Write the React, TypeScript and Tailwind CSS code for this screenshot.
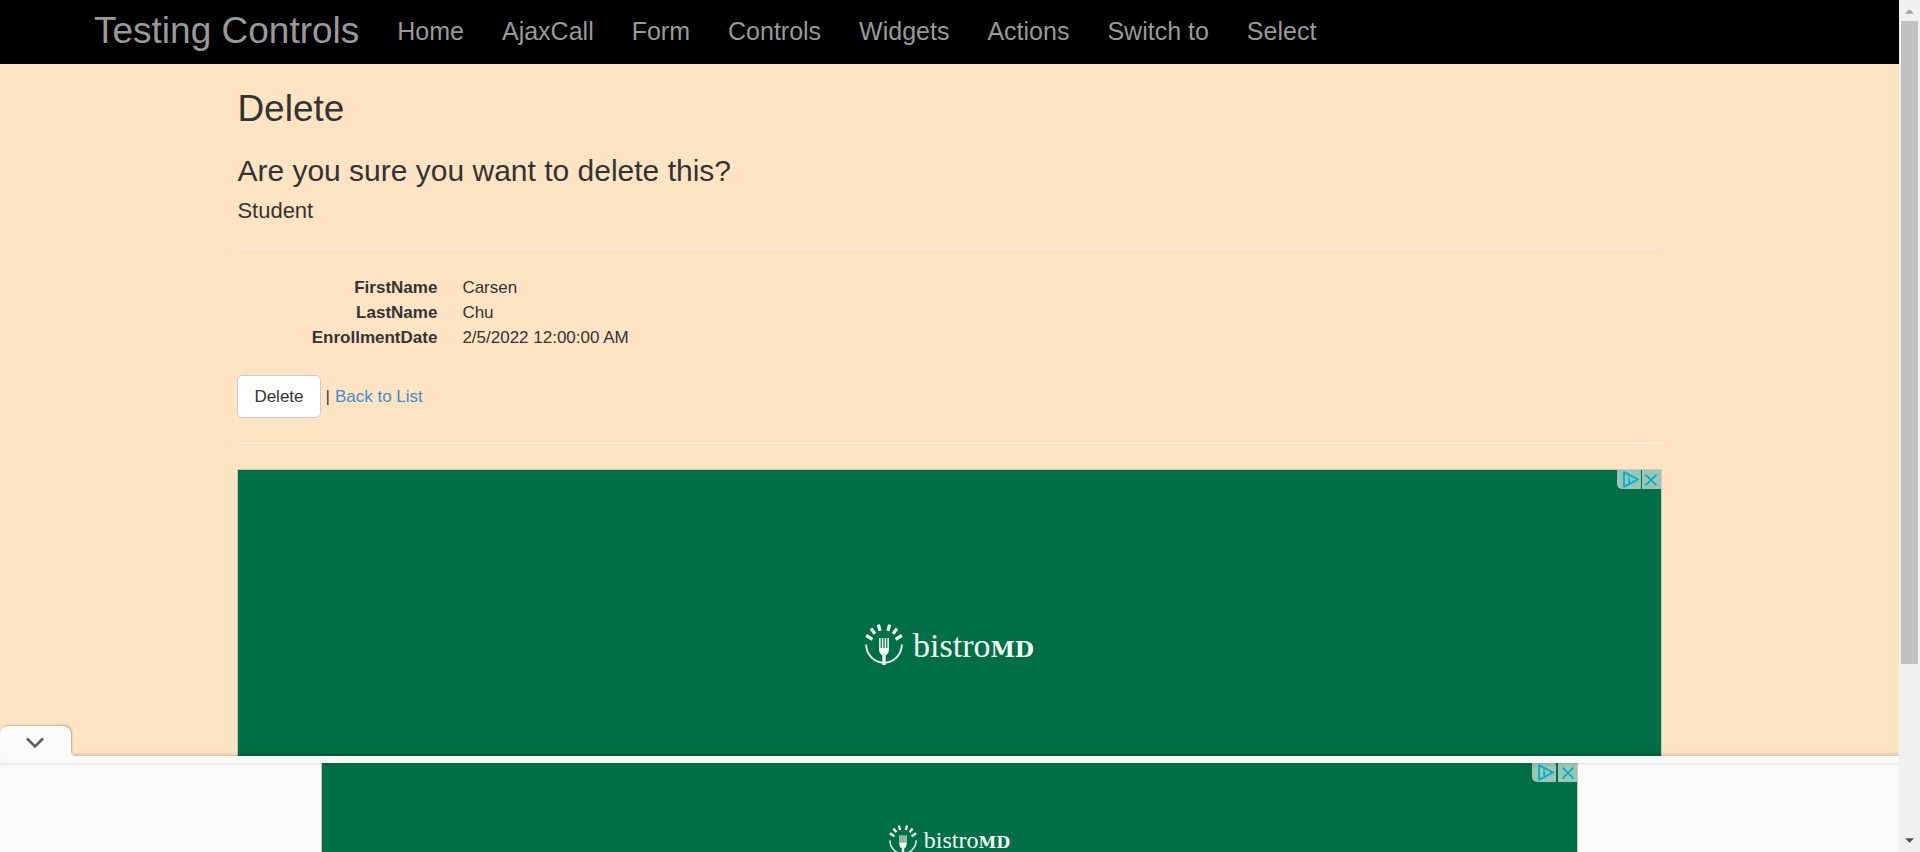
const navItems = ['Home', 'AjaxCall', 'Form', 'Controls', 'Widgets', 'Actions', 'Switch to', 'Select'];

const student = [
  { label: 'FirstName', value: 'Carsen' },
  { label: 'LastName', value: 'Chu' },
  { label: 'EnrollmentDate', value: '2/5/2022 12:00:00 AM' },
];

function ForkMark({ className }: { className: string }) {
  return (
    <svg viewBox="0 0 38 42" className={className} fill="none" stroke="#f4faf6" aria-hidden="true">
      <path d="M1.2 20.5a17.8 18.3 0 1 0 35.6 0" strokeWidth="1.9" />
      <path
        d="M1.2 11.3l6.2 4M6 4.6l4 5.1M13.4 .6l1.7 6.2M24.6 .6L22.9 6.8M32 4.6l-4 5.1M36.8 11.3L30.6 15.3"
        strokeWidth="3.2"
      />
      <path d="M14.9 14v12M17.6 14v12M20.4 14v12M23.1 14v12" strokeWidth="1.5" />
      <path d="M14.2 24h9.6v2.6c0 2.6-1.6 4-3.1 4.8V41h-3.4v-9.6c-1.5-.8-3.1-2.2-3.1-4.8z" fill="#f4faf6" stroke="none" />
    </svg>
  );
}

function AdBadge({ gap }: { gap: string }) {
  return (
    <div className={`absolute right-0 top-0 flex h-[19px] ${gap}`}>
      <button type="button" aria-label="AdChoices" className="flex w-6 items-center justify-center rounded-bl-[5px] bg-[#99c5b4]">
        <svg viewBox="0 0 16 17" className="ml-1 h-[17px] w-4" fill="none" stroke="#00aecd" aria-hidden="true">
          <path d="M1 1.2v14.6L15 8.5z" strokeWidth="1.9" strokeLinejoin="round" />
          <path d="M6.2 7v5.6M6.2 4.4v1.6" strokeWidth="1.9" />
        </svg>
      </button>
      <button type="button" aria-label="Close ad" className="flex w-[19px] items-center justify-center bg-[#99c5b4]">
        <svg viewBox="0 0 12 12" className="size-3" stroke="#00aecd" strokeWidth="1.6" aria-hidden="true">
          <path d="M.5 .5l11 11M11.5 .5l-11 11" />
        </svg>
      </button>
    </div>
  );
}

export default function App() {
  return (
    <div className="flex h-screen overflow-hidden bg-[#ffe4c4] font-['Liberation_Sans',Arial,sans-serif] text-[17px] leading-[25px] text-[#333]">
      <div className="flex min-w-0 flex-1 flex-col overflow-hidden">
        <nav className="flex h-16 shrink-0 items-start bg-black px-[75px] text-[#999]">
          <a href="#" className="px-[19px] text-[37px] leading-[62px]">
            Testing Controls
          </a>
          <ul className="flex text-[25px] leading-[62px]">
            {navItems.map((item) => (
              <li key={item}>
                <a href="#" className="block px-[19px]">
                  {item}
                </a>
              </li>
            ))}
          </ul>
        </nav>

        <main className="mx-auto min-h-0 w-3/4 flex-1 overflow-hidden">
          <h2 className="mt-6 text-[37px] leading-[41px]">Delete</h2>
          <h3 className="mt-[25px] text-[30px] leading-[34px]">Are you sure you want to delete this?</h3>
          <h4 className="mt-[10px] text-[22px] leading-[25px]">Student</h4>
          <hr className="mt-[26px] border-[#eee]" />
          <dl className="mt-[25px] grid grid-cols-[200px_1fr] gap-x-[25px]">
            {student.map(({ label, value }) => (
              <div key={label} className="contents">
                <dt className="text-right font-bold">{label}</dt>
                <dd>{value}</dd>
              </div>
            ))}
          </dl>
          <form className="mt-[25px] flex items-center gap-[5px]" onSubmit={(e) => e.preventDefault()}>
            <button type="submit" className="h-[43px] rounded-[5px] border border-[#ccc] bg-white px-4">
              Delete
            </button>
            <span>|</span>
            <a href="#" className="text-[#428bca]">
              Back to List
            </a>
          </form>
          <hr className="mt-[25px] border-[#eee]" />
          <section aria-label="Advertisement" className="relative mt-[25px] flex h-[352px] items-center justify-center gap-[10px] border border-[#c8c8c0] bg-[#006e46]">
            <ForkMark className="h-[42px] w-[38px]" />
            <p className="pt-1 font-['Liberation_Serif',serif] text-[34px] leading-[42px] text-[#f4faf6]">
              bistro<span className="font-['DejaVu_Serif',serif] text-[22px] font-bold">MD</span>
            </p>
            <AdBadge gap="gap-px" />
          </section>
        </main>

        <aside className="relative h-24 shrink-0 bg-[#fafafa] shadow-[0_0_5px_rgba(0,0,0,0.3)]">
          <button
            type="button"
            aria-label="Collapse ad"
            className="absolute bottom-full left-0 flex h-[30px] w-[71px] items-center justify-center rounded-t-lg bg-[#fafafa] shadow-[1px_-1px_2px_rgba(0,0,0,0.25)]"
          >
            <svg viewBox="0 0 18 12" className="mr-px mt-1 h-3 w-[18px]" fill="none" stroke="#5f5f5f" strokeWidth="2.6" aria-hidden="true">
              <path d="M1 1.5l8 8 8-8" />
            </svg>
            <svg viewBox="0 0 6 6" className="absolute bottom-0 left-full size-[6px]" fill="#fafafa" aria-hidden="true">
              <path d="M0 0C0 4 2 6 6 6H0z" />
            </svg>
          </button>
          <div className="relative z-10 h-[7px] bg-[#fafafa] shadow-[0_1px_3px_rgba(0,0,0,0.12)]" />
          <div className="h-[89px] overflow-hidden">
            <section aria-label="Banner advertisement" className="relative mx-auto flex h-[154px] w-[1257px] max-w-full items-center justify-center gap-[7px] border-x border-[#c8c8c0] bg-[#006e46]">
              <ForkMark className="h-[31px] w-7" />
              <p className="pt-[2px] font-['Liberation_Serif',serif] text-[24px] leading-[30px] text-[#f4faf6]">
                bistro<span className="font-['DejaVu_Serif',serif] text-[16px] font-bold">MD</span>
              </p>
              <AdBadge gap="gap-[2px]" />
            </section>
          </div>
        </aside>
      </div>

      <div aria-hidden="true" className="flex w-[21px] shrink-0 flex-col items-center bg-[#f0f0f0]">
        <svg viewBox="0 0 10 5" className="mt-[9px] h-[5px] w-[9px]" fill="#a3a3a3">
          <path d="M0 5L5 0L10 5z" />
        </svg>
        <div className="mt-[7px] h-[643px] w-[17px] bg-[#c1c1c1]" />
        <svg viewBox="0 0 10 5" className="mb-[9px] mt-auto h-[5px] w-[9px]" fill="#505050">
          <path d="M0 0L5 5L10 0z" />
        </svg>
      </div>
    </div>
  );
}
